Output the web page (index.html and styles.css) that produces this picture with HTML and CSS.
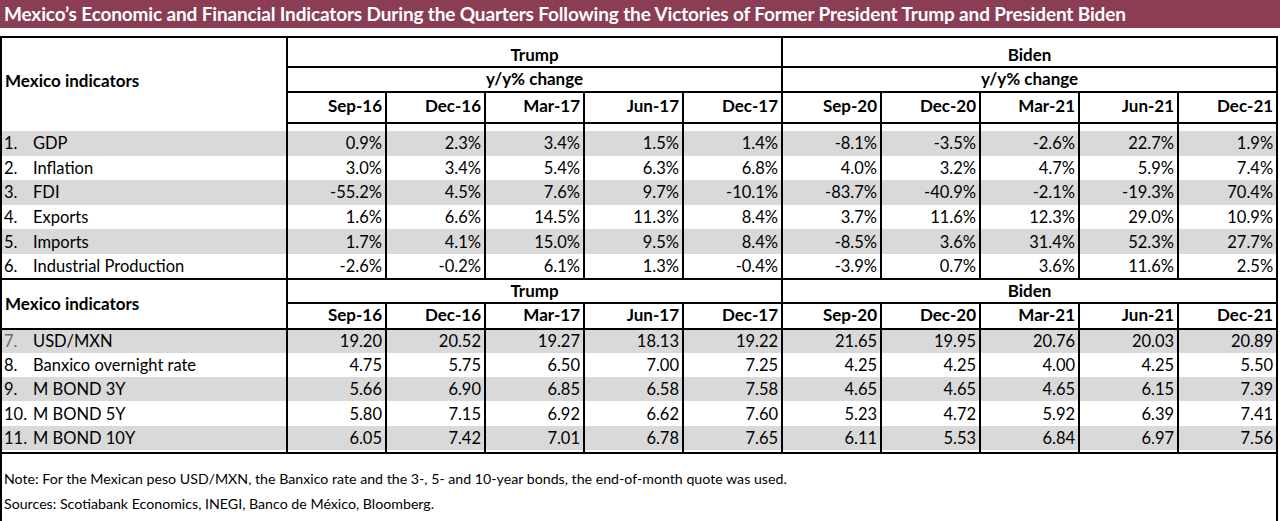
FILE: index.html
```html
<!DOCTYPE html>
<html>
<head>
<meta charset="utf-8">
<title>Mexico indicators</title>
<link rel="stylesheet" href="styles.css">
</head>
<body>
<div class="title">Mexico’s Economic and Financial Indicators During the Quarters Following the Victories of Former President Trump and President Biden</div>
<table class="ind">
<colgroup><col class="c-label"><col class="c-num" span="10"></colgroup>
<tbody>
<tr class="h-group"><th class="lbl" rowspan="3">Mexico indicators</th><th colspan="5" class="grp">Trump</th><th colspan="5" class="grp">Biden</th></tr>
<tr class="h-sub"><th colspan="5" class="grp">y/y% change</th><th colspan="5" class="grp">y/y% change</th></tr>
<tr class="h-dates"><th>Sep-16</th><th>Dec-16</th><th>Mar-17</th><th>Jun-17</th><th>Dec-17</th><th>Sep-20</th><th>Dec-20</th><th>Mar-21</th><th>Jun-21</th><th>Dec-21</th></tr>
<tr class="spacer"><td></td><td></td><td></td><td></td><td></td><td></td><td></td><td></td><td></td><td></td><td></td></tr>
<tr class="row shade"><td class="name"><span class="no">1.</span>GDP</td><td>0.9%</td><td>2.3%</td><td>3.4%</td><td>1.5%</td><td>1.4%</td><td>-8.1%</td><td>-3.5%</td><td>-2.6%</td><td>22.7%</td><td>1.9%</td></tr>
<tr class="row"><td class="name"><span class="no">2.</span>Inflation</td><td>3.0%</td><td>3.4%</td><td>5.4%</td><td>6.3%</td><td>6.8%</td><td>4.0%</td><td>3.2%</td><td>4.7%</td><td>5.9%</td><td>7.4%</td></tr>
<tr class="row shade"><td class="name"><span class="no">3.</span>FDI</td><td>-55.2%</td><td>4.5%</td><td>7.6%</td><td>9.7%</td><td>-10.1%</td><td>-83.7%</td><td>-40.9%</td><td>-2.1%</td><td>-19.3%</td><td>70.4%</td></tr>
<tr class="row"><td class="name"><span class="no">4.</span>Exports</td><td>1.6%</td><td>6.6%</td><td>14.5%</td><td>11.3%</td><td>8.4%</td><td>3.7%</td><td>11.6%</td><td>12.3%</td><td>29.0%</td><td>10.9%</td></tr>
<tr class="row shade"><td class="name"><span class="no">5.</span>Imports</td><td>1.7%</td><td>4.1%</td><td>15.0%</td><td>9.5%</td><td>8.4%</td><td>-8.5%</td><td>3.6%</td><td>31.4%</td><td>52.3%</td><td>27.7%</td></tr>
<tr class="row last"><td class="name"><span class="no">6.</span>Industrial Production</td><td>-2.6%</td><td>-0.2%</td><td>6.1%</td><td>1.3%</td><td>-0.4%</td><td>-3.9%</td><td>0.7%</td><td>3.6%</td><td>11.6%</td><td>2.5%</td></tr>
<tr class="h-group2"><th class="lbl" rowspan="2">Mexico indicators</th><th colspan="5" class="grp">Trump</th><th colspan="5" class="grp">Biden</th></tr>
<tr class="h-dates h-dates2"><th>Sep-16</th><th>Dec-16</th><th>Mar-17</th><th>Jun-17</th><th>Dec-17</th><th>Sep-20</th><th>Dec-20</th><th>Mar-21</th><th>Jun-21</th><th>Dec-21</th></tr>
<tr class="row row2 shade"><td class="name"><span class="no faded">7.</span>USD/MXN</td><td>19.20</td><td>20.52</td><td>19.27</td><td>18.13</td><td>19.22</td><td>21.65</td><td>19.95</td><td>20.76</td><td>20.03</td><td>20.89</td></tr>
<tr class="row row2"><td class="name"><span class="no">8.</span>Banxico overnight rate</td><td>4.75</td><td>5.75</td><td>6.50</td><td>7.00</td><td>7.25</td><td>4.25</td><td>4.25</td><td>4.00</td><td>4.25</td><td>5.50</td></tr>
<tr class="row row2 shade"><td class="name"><span class="no">9.</span>M BOND 3Y</td><td>5.66</td><td>6.90</td><td>6.85</td><td>6.58</td><td>7.58</td><td>4.65</td><td>4.65</td><td>4.65</td><td>6.15</td><td>7.39</td></tr>
<tr class="row row2"><td class="name"><span class="no">10.</span>M BOND 5Y</td><td>5.80</td><td>7.15</td><td>6.92</td><td>6.62</td><td>7.60</td><td>5.23</td><td>4.72</td><td>5.92</td><td>6.39</td><td>7.41</td></tr>
<tr class="row row2 shade"><td class="name"><span class="no">11.</span>M BOND 10Y</td><td>6.05</td><td>7.42</td><td>7.01</td><td>6.78</td><td>7.65</td><td>6.11</td><td>5.53</td><td>6.84</td><td>6.97</td><td>7.56</td></tr>
<tr class="spacer spacer-end"><td></td><td></td><td></td><td></td><td></td><td></td><td></td><td></td><td></td><td></td><td></td></tr>
</tbody>
</table>
<div class="notes">
<p>Note: For the Mexican peso USD/MXN, the Banxico rate and the 3-, 5- and 10-year bonds, the end-of-month quote was used.</p>
<p>Sources: Scotiabank Economics, INEGI, Banco de México, Bloomberg.</p>
</div>
</body>
</html>
```
FILE: styles.css
```css
* { box-sizing: border-box; }
body {
  margin: 0;
  font-family: Lato, "Liberation Sans", sans-serif;
  color: #000;
  background: #fff;
}
.title {
  background: #8a3d53;
  color: #fff;
  font-weight: 700;
  font-size: 19px;
  letter-spacing: -0.15px;
  height: 28px;
  line-height: 28px;
  padding-left: 4px;
  white-space: nowrap;
  margin-bottom: 8px;
}
.ind {
  border-collapse: collapse;
  table-layout: fixed;
  width: 1278px;
  border: 2px solid #000;
}
.c-label { width: 286px; }
.c-num { width: 99px; }
td, th {
  padding: 0 3px;
  border-left: 2px solid #000;
  border-right: 2px solid #000;
  font-size: 16.5px;
  line-height: 20px;
  white-space: nowrap;
}
th { font-weight: 700; font-size: 17px; }
td { text-align: right; }
th { text-align: right; }
th.grp { text-align: center; border-bottom: 2px solid #000; }
th.lbl { text-align: left; font-size: 17px; padding-left: 3px; }
.h-group th.grp { height: 30px; padding-top: 5px; padding-bottom: 0; }
.h-sub th { height: 25px; padding-top: 0; padding-bottom: 1px; }
.h-dates th { height: 31px; border-bottom: 2px solid #000; padding-bottom: 4px; }
.h-group2 th.lbl { border-bottom: 2px solid #000; padding-bottom: 0; }
.h-group2 th.grp { height: 24px; padding-top: 0; padding-bottom: 0; }
.h-dates2 th { height: 26px; padding-top: 0; padding-bottom: 1px; }
.spacer td { height: 8px; padding: 0; }
.spacer-end td { height: 3px; }
.row td { height: 24.6px; padding-top: 0; padding-bottom: 0; }
.row2 td { height: 24.3px; }
.row.last td { border-bottom: 2px solid #000; }
.shade td { background: #d9d9d9; }
td.name { text-align: left; padding-left: 2px; }
.no { display: inline-block; width: 29px; }
.faded { color: #6b6b6b; }
.notes {
  width: 1278px;
  border: 2px solid #000;
  border-top: none;
  padding: 12px 2px 6px;
  font-size: 14.2px;
}
.notes p { margin: 0; line-height: 25px; }
```
